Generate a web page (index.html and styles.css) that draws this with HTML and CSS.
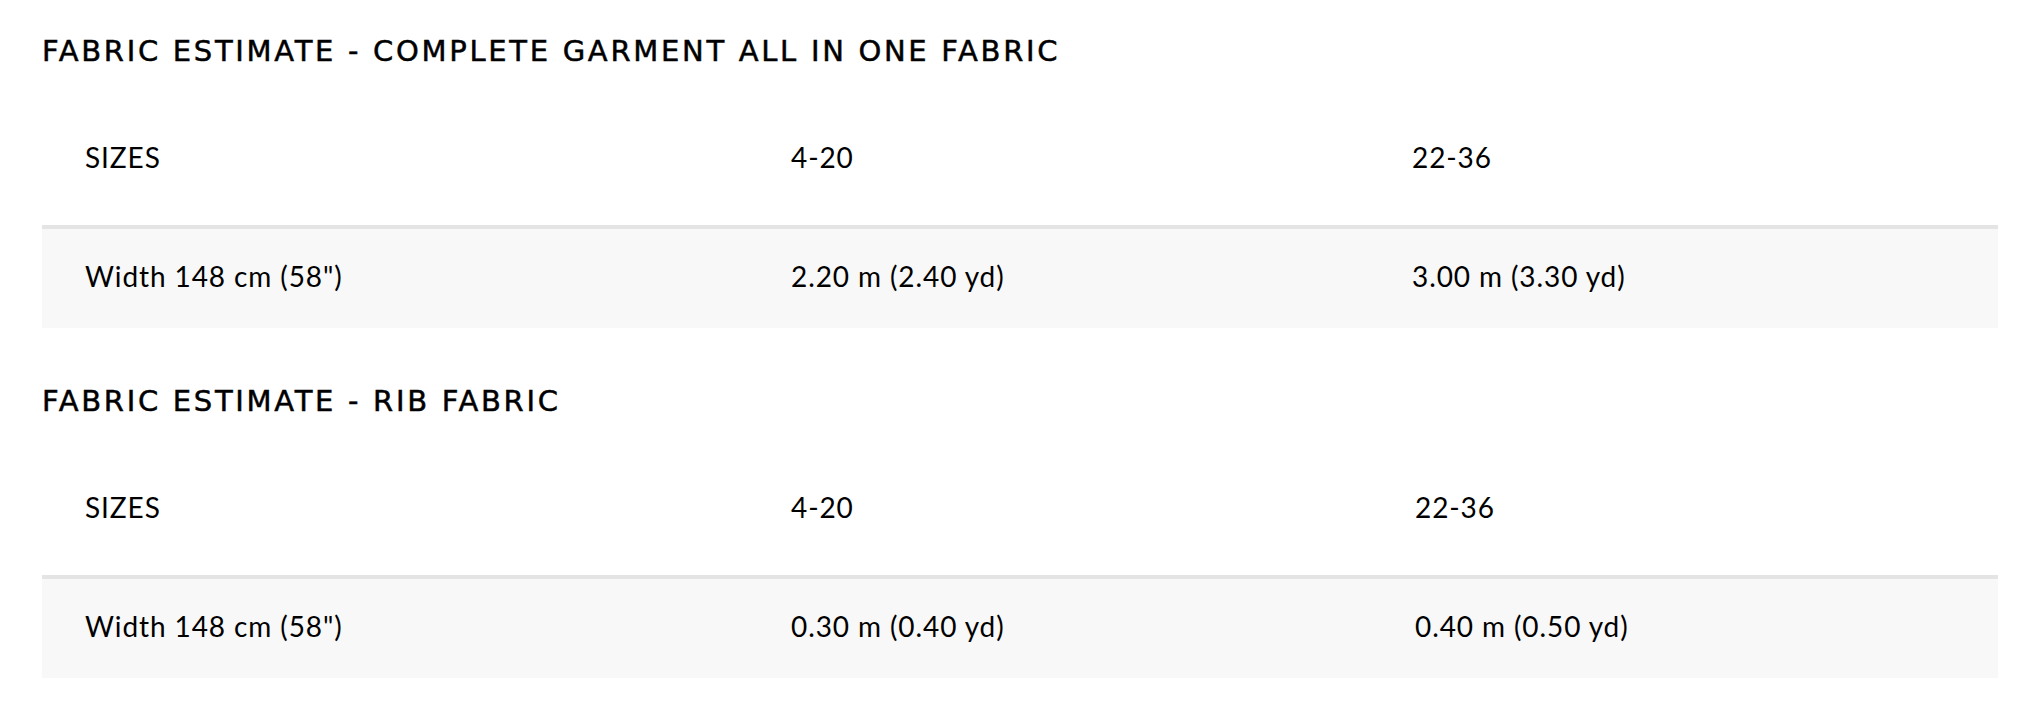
FILE: index.html
```html
<!DOCTYPE html>
<html lang="en">
<head>
<meta charset="utf-8">
<title>Fabric estimate</title>
<link rel="stylesheet" href="styles.css">
</head>
<body>
<main class="page">
  <section class="estimate">
    <h2 class="estimate-title">FABRIC ESTIMATE - COMPLETE GARMENT ALL IN ONE FABRIC</h2>
    <table class="estimate-table">
      <colgroup>
        <col class="col-label">
        <col class="col-a">
        <col class="col-b">
      </colgroup>
      <thead>
        <tr><th>SIZES</th><th>4-20</th><th>22-36</th></tr>
      </thead>
      <tbody>
        <tr><td>Width 148 cm (58")</td><td>2.20 m (2.40 yd)</td><td>3.00 m (3.30 yd)</td></tr>
      </tbody>
    </table>
  </section>
  <section class="estimate">
    <h2 class="estimate-title">FABRIC ESTIMATE - RIB FABRIC</h2>
    <table class="estimate-table estimate-table--rib">
      <colgroup>
        <col class="col-label">
        <col class="col-a">
        <col class="col-b">
      </colgroup>
      <thead>
        <tr><th>SIZES</th><th>4-20</th><th>22-36</th></tr>
      </thead>
      <tbody>
        <tr><td>Width 148 cm (58")</td><td>0.30 m (0.40 yd)</td><td>0.40 m (0.50 yd)</td></tr>
      </tbody>
    </table>
  </section>
</main>
</body>
</html>
```
FILE: styles.css
```css
html, body {
  margin: 0;
  padding: 0;
  background: #ffffff;
}

.page {
  display: flex;
  flex-direction: column;
  gap: 22px;
  padding: 0 36px 0 42px;
  color: #000000;
}

.estimate {
  padding-top: 35px;
}

.estimate-title {
  margin: 0;
  font-family: "DejaVu Sans", sans-serif;
  font-weight: normal;
  font-size: 29px;
  line-height: 32px;
  letter-spacing: 2.7px;
  -webkit-text-stroke: 0.5px #000000;
  color: #000000;
}

.estimate-table {
  width: 100%;
  margin-top: 43px;
  border-collapse: collapse;
  table-layout: fixed;
  font-family: "Lato", sans-serif;
  font-size: 28px;
  line-height: 34px;
  color: #000000;
}

.col-label { width: 706px; }
.col-a { width: 621px; }
.col-b { width: auto; }

.estimate-table--rib .col-a { width: 624px; }

.estimate-table th,
.estimate-table td {
  text-align: left;
  font-weight: normal;
  white-space: nowrap;
  padding: 0 0 0 43px;
  letter-spacing: 0.9px;
}

.estimate-table th {
  padding-top: 30px;
  padding-bottom: 51px;
}

.estimate-table thead tr {
  border-bottom: 4px solid #e4e4e4;
}

.estimate-table tbody tr {
  background: #f8f8f8;
}

.estimate-table td {
  padding-top: 30px;
  padding-bottom: 35px;
}
```
